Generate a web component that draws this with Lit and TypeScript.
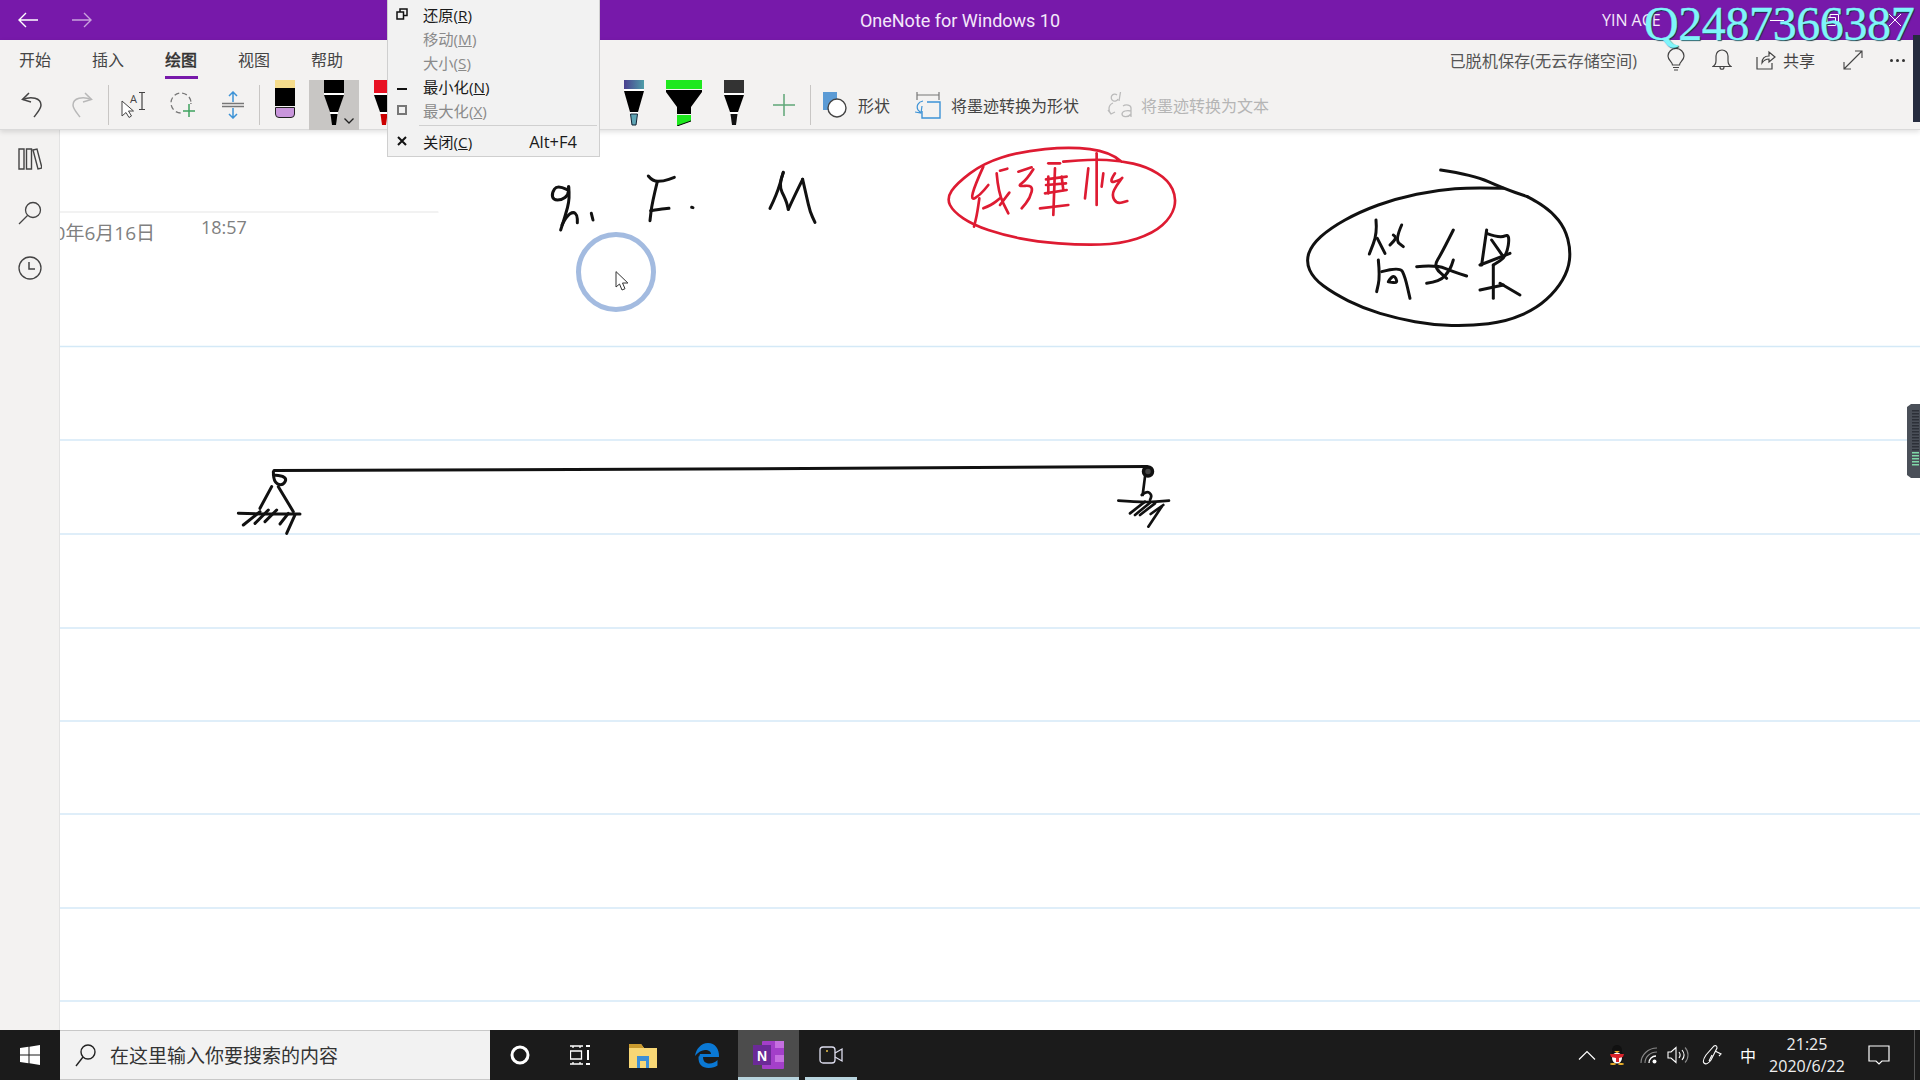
import {css, html, LitElement, svg} from "lit";
import {customElement} from "lit/decorators.js";

const smooth = (pts: string) => {
    const p = pts.trim().split(/\s+/).map(s => s.split(",").map(Number));
    if (p.length < 3) return `M${p[0]} L${p[p.length - 1]}`;
    let d = `M${p[0][0]} ${p[0][1]}`;
    for (let i = 1; i < p.length - 1; i++) {
        const mx = (p[i][0] + p[i + 1][0]) / 2;
        const my = (p[i][1] + p[i + 1][1]) / 2;
        d += ` Q${p[i][0]} ${p[i][1]} ${mx} ${my}`;
    }
    const l = p[p.length - 1];
    return d + ` L${l[0]} ${l[1]}`;
};

// ink strokes, written in the coordinates of a 3x crop at (x, y)
const INK = [
    {x: 520, y: 140, color: "#111", w: 9, strokes: [
        "140,148 112,134 95,160 100,180 125,180 145,165 146,140",
        "146,140 150,175 135,230 122,270",
        "126,255 140,228 160,215 172,226 172,248",
        "214,220 219,240",
        "385,108 398,124 430,124 463,112",
        "412,125 396,190 390,242",
        "392,212 420,208 447,205",
        "515,202 519,203",
        "750,205 770,165 790,97",
        "790,97 775,135 798,180 805,208",
        "805,208 825,165 848,118",
        "848,118 860,170 870,215 885,247",
    ]},
    {x: 920, y: 130, color: "#DE1B32", w: 8, strokes: [
        "605,95 570,65 450,50 300,65 190,100 110,160 80,205 100,245 160,285 250,315 350,335 480,345 600,342 700,310 755,260 770,205 745,150 680,110 600,92 520,88 430,95",
        "190,110 165,165 152,212 180,195 205,165",
        "178,205 172,250 162,290",
        "190,235 215,225 240,205",
        "230,130 235,190 265,250",
        "240,122 262,116",
        "268,188 240,225",
        "295,125 335,112",
        "340,118 320,150 290,170 340,165 330,205 305,235",
        "385,100 420,100",
        "378,148 440,140",
        "385,140 385,190",
        "378,165 438,160",
        "375,190 440,180",
        "425,140 430,180",
        "360,235 445,225",
        "405,115 400,255",
        "505,115 495,205",
        "530,70 530,225",
        "550,130 545,170",
        "585,130 565,160 600,150 610,140 590,165 575,195 590,222 622,213",
    ]},
    {x: 1290, y: 150, color: "#111", w: 9, strokes: [
        "452,60 550,75 640,115 712,140",
        "640,115 550,112 440,120 320,145 210,185 120,235 65,285 48,335 70,385 130,430 220,475 320,505 430,525 540,528 650,515 740,475 800,420 835,360 842,300 825,235 785,185 740,155 712,140",
        "258,210 262,250 238,312",
        "262,265 285,310",
        "310,255 322,262 300,285",
        "335,225 315,270 340,290",
        "265,330 270,380 260,425",
        "275,365 330,350 345,380 360,445",
        "295,395 310,370 325,400 295,395",
        "490,240 455,310 430,350 470,385",
        "380,350 440,345 490,365 530,378",
        "410,400 450,395 480,360 490,330",
        "590,240 575,345",
        "590,250 630,265 660,250 650,320 610,345",
        "605,270 640,320",
        "660,310 570,345",
        "570,420 640,405",
        "610,345 610,445",
        "630,400 690,435",
    ]},
    {x: 220, y: 450, color: "#111", w: 9, strokes: [
        "160,65 160,95 185,108 200,90 190,78 160,75",
        "155,110 120,175",
        "175,110 220,185",
        "55,190 150,192 240,192",
        "120,185 70,225",
        "145,180 105,220",
        "170,180 135,215",
        "205,190 180,222",
        "225,195 200,250",
    ]},
    {x: 1100, y: 450, color: "#111", w: 8, strokes: [
        "135,80 128,135",
        "125,135 140,122 156,135 150,150",
        "55,152 130,158 207,152",
        "135,155 90,190",
        "150,158 105,195",
        "165,160 120,195",
        "190,165 152,192",
        "185,170 145,230",
    ]},
];

const RULES = [346.5, 440, 534, 628, 721, 814, 908, 1001];

const pen = (top: string, tip: string) => html`
    <svg width="24" height="46" viewBox="0 0 24 46">
        <rect x="2" y="0" width="20" height="13" fill=${top}></rect>
        <rect x="2" y="13" width="20" height="2" fill="#fff"></rect>
        <polygon points="2,15 22,15 16,32 8,32" fill="#000"></polygon>
        <rect x="8" y="32" width="8" height="2" fill="#fff"></rect>
        <polygon points="8.5,34 15.5,34 14,45 10,45" fill=${tip}></polygon>
    </svg>`;

@customElement("app-root")
export class AppRoot extends LitElement {
    protected override render() {
        return html`
            <div class="titlebar">
                <div class="nav">
                    <svg width="22" height="16" viewBox="0 0 22 16" fill="none" stroke="#fff" stroke-width="1.4"><path d="M21 8H2M9 1L2 8l7 7"></path></svg>
                    <svg width="22" height="16" viewBox="0 0 22 16" fill="none" stroke="#C9A2DD" stroke-width="1.4"><path d="M1 8h19M13 1l7 7-7 7"></path></svg>
                </div>
                <div class="title">OneNote for Windows 10</div>
                <div class="account">
                    <span class="user">YIN ACE</span>
                    <span class="bar"></span>
                    <span class="min"></span>
                    <svg class="restore" width="12" height="12" viewBox="0 0 12 12" fill="none" stroke="#fff"><path d="M.5 3.5h8v8h-8zM3 3V.5h8.500v8H9"></path></svg>
                    <svg class="close" width="12" height="12" viewBox="0 0 12 12" fill="none" stroke="#fff"><path d="M0 0l12 12M12 0L0 12"></path></svg>
                </div>
            </div>

            <div class="ribbon">
                <div class="tabs">
                    <span class="tab">开始</span>
                    <span class="tab">插入</span>
                    <span class="tab active">绘图</span>
                    <span class="tab">视图</span>
                    <span class="tab">帮助</span>
                    <div class="status">
                        <span class="saved">已脱机保存(无云存储空间)</span>
                        <span class="top-btn">
                            <svg width="20" height="24" viewBox="0 0 20 24" fill="none" stroke="#444" stroke-width="1.2"><path d="M6.500 17c0-3-4.500-4.500-4.500-9a8 7.500 0 0 1 16 0c0 4.500-4.500 6-4.500 9zM7 19.500h6M8 22h4"></path></svg>
                        </span>
                        <span class="top-btn">
                            <svg width="20" height="22" viewBox="0 0 20 22" fill="none" stroke="#444" stroke-width="1.2"><path d="M1 17.500c2.500-1.500 3-3 3-6V7a6 6 0 0 1 12 0v4.500c0 3 .5 4.500 3 6zM8 18c0 3 4 3 4 0"></path></svg>
                        </span>
                        <span class="share">
                            <svg width="20" height="20" viewBox="0 0 20 20" fill="none" stroke="#444" stroke-width="1.200"><path d="M1 7v12h15v-6M6 13c0-5 3-7 7-7V2l6 5-6 5V9c-3 0-5 1-7 4z"></path></svg>
                            <span>共享</span>
                        </span>
                        <span class="top-btn">
                            <svg width="20" height="20" viewBox="0 0 20 20" fill="none" stroke="#444" stroke-width="1.100"><path d="M1 19L19 1M12 1h7v7M1 12v7h7"></path></svg>
                        </span>
                        <span class="top-btn dots"><i></i><i></i><i></i></span>
                    </div>
                </div>
                <div class="tools">
                    <span class="tool">
                        <svg width="24" height="28" viewBox="0 0 24 28" fill="none" stroke="#444" stroke-width="1.500"><path d="M9 2L2.500 8.500 11 11"></path><path d="M3 8.500C11 5 21 7 21 14c0 4-4 8-7 12"></path></svg>
                    </span>
                    <span class="tool">
                        <svg width="24" height="28" viewBox="0 0 24 28" fill="none" stroke="#B8B8B8" stroke-width="1.500"><path d="M15 2l6.500 6.500L13 11"></path><path d="M21 8.500C13 5 3 7 3 14c0 4 4 8 7 12"></path></svg>
                    </span>
                    <span class="sep"></span>
                    <span class="tool">
                        <svg width="26" height="28" viewBox="0 0 26 28" fill="none" stroke="#444"><path d="M2 10v15l4-3.500 3 5 2.500-1.500-3-5h5z" fill="#fff"></path><path d="M19 1.500h6M22 1.500v17M19 18.500h6" stroke-width="1.200"></path><text x="10" y="12" font-size="11" fill="#444" stroke="none" font-family="Open Sans">A</text></svg>
                    </span>
                    <span class="tool">
                        <svg width="26" height="28" viewBox="0 0 26 28" fill="none"><circle cx="11" cy="12" r="10" stroke="#777" stroke-width="1.300" stroke-dasharray="5 3"></circle><rect x="12" y="13" width="14" height="14" fill="#F3F2F1"></rect><path d="M19 13v13M13 20h12" stroke="#3FA35F" stroke-width="1.500"></path></svg>
                    </span>
                    <span class="tool">
                        <svg width="24" height="28" viewBox="0 0 24 28" fill="none"><path d="M12 1v10M8 5l4-4 4 4M12 27V17M8 23l4 4 4-4" stroke="#3D93D6" stroke-width="1.500"></path><path d="M1 12.500h22M1 15.500h22" stroke="#777" stroke-width="1.300"></path></svg>
                    </span>
                    <span class="sep"></span>
                    <span class="tool tall">
                        <svg class="eraser" width="22" height="38" viewBox="0 0 22 38"><rect x="1" y="0" width="20" height="8" fill="#F5DC8C"></rect><rect x="1" y="8" width="20" height="18" fill="#000"></rect><path d="M1.500 27.500h19V34a3.500 3.500 0 0 1-3.500 3.500H5A3.500 3.500 0 0 1 1.500 34z" fill="#C996DC" stroke="#222"></path></svg>
                    </span>
                    <span class="tool selected tall">
                        ${pen("#000", "#000")}
                        <svg class="caret" width="10" height="6" viewBox="0 0 10 6" fill="none" stroke="#222" stroke-width="1.300"><path d="M.5.500L5 5 9.500.500"></path></svg>
                    </span>
                    <span class="tool tall">${pen("#E81123", "#C00")}</span>
                    <span class="hidden-pens"></span>
                    <span class="tool tall">
                        <svg width="24" height="46" viewBox="0 0 24 46"><defs><linearGradient id="ink" x1="0" x2="1"><stop offset="0" stop-color="#4A3F8F"></stop><stop offset="1" stop-color="#4E9DA8"></stop></linearGradient></defs><rect x="2" y="0" width="20" height="9" fill="url(#ink)"></rect><rect x="2" y="9" width="20" height="2" fill="#fff"></rect><polygon points="2,11 22,11 16,32 8,32" fill="#000"></polygon><rect x="8" y="32" width="8" height="2" fill="#fff"></rect><polygon points="8.500,34 15.500,34 14,45 10,45" fill="#5FA5B5" stroke="#123"></polygon></svg>
                    </span>
                    <span class="tool tall">
                        <svg width="38" height="46" viewBox="0 0 38 46"><rect x="1" y="0" width="36" height="9" fill="#1EE81E"></rect><polygon points="1,10 37,10 37,12 26,27 26,34 12,34 12,27 1,12" fill="#000"></polygon><polygon points="12,35 26,35 26,41 12,46" fill="#1EE81E"></polygon><path d="M12 46l14-5" stroke="#000" fill="none"></path></svg>
                    </span>
                    <span class="tool tall">${pen("#333", "#111")}</span>
                    <span class="tool">
                        <svg width="22" height="30" viewBox="0 0 22 30" fill="none" stroke="#5FA777" stroke-width="1.500"><path d="M11 4v22M0 15h22"></path></svg>
                    </span>
                    <span class="sep"></span>
                    <span class="action first">
                        <svg width="26" height="28" viewBox="0 0 26 28"><rect x="1" y="1" width="14" height="18" fill="#5B9BD5"></rect><circle cx="15" cy="17" r="9" fill="#fff" stroke="#444" stroke-width="1.400"></circle></svg>
                        <span>形状</span>
                    </span>
                    <span class="action second">
                        <svg width="26" height="28" viewBox="0 0 26 28" fill="none"><path d="M2 1v8M24 1v8M2 4h22" stroke="#777" stroke-width="1.200"></path><path d="M12 11h13v16H7v-7" stroke="#3D93D6" stroke-width="1.400"></path><path d="M8 10C3 11 1 15 3 19l3 3M7 15l-1 7-6-1" stroke="#3D93D6" stroke-width="1.200"></path></svg>
                        <span>将墨迹转换为形状</span>
                    </span>
                    <span class="action disabled">
                        <svg width="26" height="30" viewBox="0 0 26 30" fill="none" stroke="#BBB" stroke-width="1.300"><path d="M6 13c-5 2-5 8-2 11M1 20l3 4 4-2"></path><path d="M10 5a3.500 3.500 0 1 0 1 4M13.500 2l-1.500 9"></path><path d="M16 16c3-2 8-1 8 2v9M24 21c-4-1-9 0-9 3s6 4 9 0"></path></svg>
                        <span>将墨迹转换为文本</span>
                    </span>
                </div>
            </div>

            <div class="main">
                <nav class="side">
                    <svg width="24" height="22" viewBox="0 0 24 22" fill="none" stroke="#444" stroke-width="1.400"><path d="M1 1h5v20H1zM8.500 1h5v20h-5zM15 2l4-1 5 19-4 1z"></path></svg>
                    <svg width="24" height="24" viewBox="0 0 24 24" fill="none" stroke="#444" stroke-width="1.300"><circle cx="15" cy="9" r="7.500"></circle><path d="M9.500 14.500L1 23"></path></svg>
                    <svg width="24" height="24" viewBox="0 0 24 24" fill="none" stroke="#444" stroke-width="1.300"><circle cx="12" cy="12" r="11"></circle><path d="M11 6v7h6" stroke-width="1.500"></path></svg>
                </nav>
                <div class="page">
                    <svg class="ink" width="1860" height="900" viewBox="60 130 1860 900" fill="none" stroke-linecap="round" stroke-linejoin="round">
                        ${RULES.map(y => svg`<line x1="60" x2="1920" y1=${y} y2=${y} stroke="#D4E9F7" stroke-width="1.500"></line>`)}
                        <line x1="60" x2="438" y1="212" y2="212" stroke="#E6E6E6" stroke-width="1.200"></line>
                        <path d="M274 470.500L700 469 1147 466.500" stroke="#111" stroke-width="3"></path>
                        <circle cx="1148" cy="471.500" r="4.500" stroke="#111" stroke-width="3.500" fill="#444"></circle>
                        <circle cx="616" cy="272" r="37.500" stroke="#A3BBE0" stroke-width="5"></circle>
                        ${INK.map(g => svg`
                            <g transform="translate(${g.x} ${g.y}) scale(.3333)" stroke=${g.color} stroke-width=${g.w}>
                                ${g.strokes.map(s => svg`<path d=${smooth(s)}></path>`)}
                            </g>`)}
                        <path d="M616 272v15l3.500-3 2.500 6 3-1.300-2.500-5.700h5z" fill="#fff" stroke="#333" stroke-width="1"></path>
                    </svg>
                    <div class="date">2020年6月16日</div>
                    <div class="time">18:57</div>
                </div>
            </div>

            <div class="taskbar">
                <span class="start">
                    <svg width="20" height="20" viewBox="0 0 20 20" fill="#fff"><path d="M0 3l8.500-1.200v7.700H0zM9.500 1.700L20 0v9.500H9.500zM0 10.500h8.500v7.700L0 17zM9.500 10.500H20V20L9.500 18.300z"></path></svg>
                </span>
                <div class="search">
                    <svg width="22" height="24" viewBox="0 0 22 24" fill="none" stroke="#222" stroke-width="1.400"><circle cx="13" cy="9" r="7"></circle><path d="M8 14L1 23"></path></svg>
                    <span>在这里输入你要搜索的内容</span>
                </div>
                <span class="task w60">
                    <svg width="20" height="20" viewBox="0 0 20 20" fill="none" stroke="#fff" stroke-width="3"><circle cx="10" cy="10" r="8"></circle></svg>
                </span>
                <span class="task w60">
                    <svg width="20" height="20" viewBox="0 0 20 20" fill="none" stroke="#fff" stroke-width="1.300"><path d="M0 1h13M0 19h13M.5 6h11v8H.5zM3 1v2M10 1v2M3 17v2M10 17v2"></path><path d="M16 1h4M16 19h4M18 5v10" stroke-width="2"></path></svg>
                </span>
                <span class="task explorer">
                    <svg width="28" height="26" viewBox="0 0 28 26"><path d="M0 2h12l3 4h13v20H0z" fill="#F8D775"></path><path d="M0 2h12l3 4H0z" fill="#C99A2E"></path><path d="M8 14h12v12h-3v-7h-6v7H8z" fill="#3D8FD6"></path></svg>
                </span>
                <span class="task edge">
                    <svg width="26" height="28" viewBox="0 0 26 28" fill="none"><path d="M5 16h20c.500-8-4-14-11-14C7 2 2 8 1 15c3-4 7-6 10-6 4 0 6 2 6 4H6" fill="#0A78D4"></path><path d="M4.500 15.500c-.500 8 4 11.500 10 11.500 4 0 7-1 9-2.500v-5.500c-2 2-5 3.500-8 3.500-4 0-6.500-2-6.500-7z" fill="#0A78D4"></path></svg>
                </span>
                <span class="task onenote">
                    <svg width="32" height="30" viewBox="0 0 32 30"><rect x="9" y="1" width="22" height="28" rx="1" fill="#A33FC9"></rect><path d="M22 1h9v7h-9zM22 15h9v7h-9z" fill="#C56FE0"></path><rect x="0" y="5" width="18" height="20" fill="#6B2A97"></rect><text x="4" y="20.500" font-size="14" font-weight="700" fill="#fff" font-family="Liberation Sans">N</text></svg>
                </span>
                <span class="task camera">
                    <svg width="24" height="22" viewBox="0 0 24 22" fill="none" stroke="#DDE" stroke-width="1.300"><rect x="1" y="3" width="15" height="16" rx="3"></rect><path d="M16 9l7-4v12l-7-4"></path><circle cx="8" cy="7" r="1" fill="#E8C04A" stroke="none"></circle></svg>
                </span>
                <div class="tray">
                    <span class="t chev">
                        <svg width="18" height="10" viewBox="0 0 18 10" fill="none" stroke="#fff" stroke-width="1.200"><path d="M1 9.500l8-8 8 8"></path></svg>
                    </span>
                    <span class="t qq">
                        <svg width="16" height="20" viewBox="0 0 16 20"><ellipse cx="8" cy="12" rx="6.500" ry="7.500" fill="#111"></ellipse><ellipse cx="8" cy="5" rx="5" ry="5" fill="#111"></ellipse><ellipse cx="8" cy="13" rx="5" ry="5.500" fill="#fff"></ellipse><path d="M1 9h14l-1 3-4 1v4H7v-4l-5-1z" fill="#D8232A"></path><path d="M5 6h6L8 8z" fill="#F5B62A"></path><ellipse cx="4" cy="19" rx="3" ry="1" fill="#F5B62A"></ellipse><ellipse cx="12" cy="19" rx="3" ry="1" fill="#F5B62A"></ellipse></svg>
                    </span>
                    <span class="t wifi">
                        <svg width="18" height="18" viewBox="0 0 18 18" fill="none" stroke="#8A8A8A" stroke-width="1.100"><path d="M1 17C1 9 8 2 17 2M5 17c0-6 5-11 12-11"></path><path d="M9 17c0-4 3-7 7-7" stroke="#fff" stroke-width="1.300"></path><circle cx="14.500" cy="15.500" r="2" fill="#fff" stroke="none"></circle></svg>
                    </span>
                    <span class="t vol">
                        <svg width="22" height="18" viewBox="0 0 22 18" fill="none" stroke="#fff" stroke-width="1.100"><path d="M1 6h3l5-4.500v15L4 12H1z"></path><path d="M12 6c1.500 2 1.500 4 0 6"></path><path d="M15 4c2.500 3 2.500 7 0 10"></path><path d="M18 1.500c4 4 4 11 0 15" stroke="#888"></path></svg>
                    </span>
                    <span class="t penicon">
                        <svg width="22" height="22" viewBox="0 0 22 22" fill="none" stroke="#fff" stroke-width="1.100"><path d="M2 19c-2-2 0-5 2-8L12 2c2-1 3 0 3 2l-6 12c-2 3-5 5-7 3zM13 7l6 3-2 2M10 11l-3 6"></path></svg>
                    </span>
                    <span class="t ime">中</span>
                    <span class="t clock"><span>21:25</span><span>2020/6/22</span></span>
                    <span class="t note">
                        <svg width="22" height="20" viewBox="0 0 22 20" fill="none" stroke="#fff" stroke-width="1.200"><path d="M1 1h20v15h-7l-3 3-3-3H1z"></path></svg>
                    </span>
                    <span class="t end"></span>
                </div>
            </div>

            <div class="menu">
                <div class="item">
                    <svg width="12" height="12" viewBox="0 0 12 12" fill="none" stroke="#111" stroke-width="1.500"><path d="M1 4h6.500v7H1zM4 3.500V1h7v6.500H8"></path></svg>
                    <span>还原(<u>R</u>)</span>
                </div>
                <div class="item off"><span class="icon-gap"></span><span>移动(<u>M</u>)</span></div>
                <div class="item off"><span class="icon-gap"></span><span>大小(<u>S</u>)</span></div>
                <div class="item">
                    <svg width="12" height="12" viewBox="0 0 12 12"><rect x="1" y="8" width="10" height="2" fill="#111"></rect></svg>
                    <span>最小化(<u>N</u>)</span>
                </div>
                <div class="item off">
                    <svg width="12" height="12" viewBox="0 0 12 12" fill="none" stroke="#777" stroke-width="2"><path d="M2 2h8v8H2z"></path></svg>
                    <span>最大化(<u>X</u>)</span>
                </div>
                <div class="divider"></div>
                <div class="item">
                    <svg width="12" height="12" viewBox="0 0 12 12" fill="none" stroke="#111" stroke-width="2"><path d="M2 2l8 8M10 2l-8 8"></path></svg>
                    <span>关闭(<u>C</u>)</span>
                    <span class="shortcut">Alt+F4</span>
                </div>
            </div>

            <div class="watermark">Q2487366387</div>
            <div class="edge-bar"></div>
            <div class="handle">
                <svg width="13" height="74" viewBox="0 0 13 74">
                    <path d="M13 0H4L0 3v68l4 3h9z" fill="#4A4F58"></path>
                    ${Array.from({length: 19}, (_, i) => svg`<rect x="5" y=${6 + i * 3} width="7" height="1.500" fill=${i > 13 ? "#7FD8A8" : "#2C3038"}></rect>`)}
                </svg>
            </div>
        `;
    }

    static override styles = css`
        :host {
            display: flex;
            flex-direction: column;
            position: relative;
            width: 1920px;
            height: 1080px;
            overflow: hidden;
            background: #fff;
            color: #333;
            font-family: "Open Sans", "Noto Sans CJK SC", sans-serif;
        }
        svg {
            display: block;
            flex: none;
        }

        .titlebar {
            display: grid;
            grid-template-columns: 1fr auto 1fr;
            align-items: center;
            height: 40px;
            background: #7719AA;
            color: #fff;
        }
        .nav {
            display: flex;
            align-items: center;
            gap: 32px;
            padding-left: 17px;
            margin-top: -1px;
        }
        .title {
            font-family: Roboto, sans-serif;
            font-size: 18px;
            color: #F4E8FA;
        }
        .account {
            display: flex;
            align-items: center;
            justify-content: flex-end;
            font-size: 16px;
        }
        .user {
            width: 115px;
            color: #F4E8FA;
        }
        .bar {
            width: 1px;
            height: 20px;
            background: #fff;
        }
        .min {
            width: 14px;
            height: 1px;
            margin-left: 52px;
            background: #fff;
        }
        .restore {
            margin-left: 43px;
        }
        .close {
            margin: 0 19px 0 50px;
        }

        .ribbon {
            position: relative;
            z-index: 1;
            height: 90px;
            background: #F3F2F1;
            border-bottom: 1px solid #DADADA;
            box-shadow: 0 2px 5px rgba(0, 0, 0, 0.12);
            box-sizing: border-box;
        }
        .tabs {
            display: flex;
            align-items: center;
            gap: 40px;
            height: 40px;
            padding-left: 19px;
        }
        .tab {
            position: relative;
            width: 33px;
            font-size: 16px;
            line-height: 40px;
            color: #444;
            white-space: nowrap;
        }
        .tab.active {
            color: #333;
            font-weight: 500;
            -webkit-text-stroke: 0.3px #333;
        }
        .tab.active::after {
            content: "";
            position: absolute;
            left: 0;
            right: 0;
            bottom: 1px;
            height: 3px;
            background: #7719AA;
        }
        .status {
            display: flex;
            align-items: center;
            height: 40px;
            margin-left: auto;
            padding-right: 2px;
        }
        .saved {
            margin-right: 16px;
            font-size: 16.2px;
            color: #555;
        }
        .top-btn {
            display: flex;
            align-items: center;
            justify-content: center;
            width: 46px;
        }
        .share {
            display: flex;
            align-items: center;
            gap: 7px;
            width: 85px;
            padding-left: 11px;
            box-sizing: border-box;
            font-size: 16px;
            color: #444;
        }
        .dots {
            gap: 3px;
            width: 42px;
        }
        .dots i {
            width: 3px;
            height: 3px;
            border-radius: 50%;
            background: #333;
        }

        .tools {
            display: flex;
            align-items: center;
            height: 50px;
            padding-left: 7px;
        }
        .tool {
            position: relative;
            display: flex;
            align-items: center;
            justify-content: center;
            flex: none;
            width: 50px;
            height: 50px;
        }
        .tool.tall {
            align-items: flex-start;
        }
        .tool.selected {
            background: #C8C6C4;
        }
        .eraser {
            margin-left: 2px;
        }
        .caret {
            position: absolute;
            right: 5px;
            bottom: 6px;
        }
        .sep {
            flex: none;
            width: 1px;
            height: 40px;
            margin-left: 1px;
            background: #C8C6C4;
        }
        .sep + .tool {
            margin-left: -1px;
        }
        .hidden-pens {
            flex: none;
            width: 200px;
        }
        .action {
            display: flex;
            align-items: center;
            flex: none;
            gap: 10px;
            font-size: 16px;
            color: #444;
        }
        .action.first {
            margin-left: 11px;
        }
        .action.second {
            margin-left: 25px;
        }
        .action.disabled {
            gap: 8px;
            margin-left: 28px;
            color: #B5B5B5;
        }

        .main {
            display: flex;
            flex: 1;
            min-height: 0;
        }
        .side {
            display: flex;
            flex-direction: column;
            align-items: center;
            gap: 31px;
            flex: none;
            width: 60px;
            padding-top: 18px;
            box-sizing: border-box;
            background: #F3F2F1;
            border-right: 1px solid #E3E3E3;
        }
        .page {
            position: relative;
            flex: 1;
            overflow: hidden;
            background: #fff;
        }
        .ink {
            position: absolute;
            left: 0;
            top: 0;
        }
        .date {
            position: absolute;
            right: calc(100% - 95px);
            top: 89px;
            font-size: 19px;
            line-height: 28px;
            color: #808080;
            white-space: nowrap;
        }
        .time {
            position: absolute;
            left: 141px;
            top: 85px;
            font-size: 18px;
            line-height: 24px;
            color: #808080;
        }

        .taskbar {
            display: flex;
            align-items: center;
            height: 50px;
            background: #1B1B1B;
        }
        .start {
            display: flex;
            align-items: center;
            justify-content: center;
            flex: none;
            width: 60px;
        }
        .search {
            display: flex;
            align-items: center;
            gap: 13px;
            flex: none;
            width: 430px;
            height: 50px;
            padding-left: 15px;
            box-sizing: border-box;
            background: #F2F2F2;
            border-top: 1px solid #C8C8C8;
            border-bottom: 1px solid #C8C8C8;
            font-size: 19px;
            color: #333;
        }
        .task {
            position: relative;
            display: flex;
            align-items: center;
            justify-content: center;
            flex: none;
            height: 50px;
        }
        .task.w60 { width: 60px; }
        .task.explorer { width: 66px; }
        .task.edge { width: 62px; }
        .task.onenote {
            width: 61px;
            background: #4C4C4C;
        }
        .task.camera { width: 63px; }
        .task.onenote::after,
        .task.camera::after {
            content: "";
            position: absolute;
            left: 0;
            right: 0;
            bottom: 0;
            height: 3px;
            background: #B8D4DE;
        }
        .task.camera::after {
            left: 6px;
            right: 5px;
        }
        .tray {
            display: flex;
            align-items: center;
            height: 50px;
            margin-left: auto;
        }
        .t {
            display: flex;
            align-items: center;
            justify-content: center;
            flex: none;
        }
        .chev { width: 30px; }
        .qq { width: 30px; }
        .wifi { width: 34px; }
        .vol { width: 24px; }
        .penicon { width: 46px; }
        .ime {
            width: 24px;
            font-size: 16px;
            color: #fff;
        }
        .clock {
            flex-direction: column;
            gap: 1px;
            width: 94px;
            font-size: 16px;
            line-height: 21px;
            color: #EEE;
        }
        .note { width: 50px; }
        .end {
            width: 16px;
            height: 50px;
            box-sizing: border-box;
            border-right: 5px solid #1B1B1B;
            background: linear-gradient(90deg, #1B1B1B 10px, #555 10px, #555 11px, #1B1B1B 11px);
        }

        .menu {
            position: absolute;
            z-index: 3;
            left: 387px;
            top: 0;
            width: 213px;
            height: 157px;
            padding-top: 2px;
            box-sizing: border-box;
            background: #F2F2F2;
            border: 1px solid #CFCFCF;
            border-top: none;
            font-size: 15.3px;
            color: #1A1A1A;
        }
        .item {
            display: flex;
            align-items: center;
            gap: 15px;
            height: 24px;
            padding-left: 8px;
        }
        .item.off {
            color: #8A8A8A;
        }
        .icon-gap {
            width: 12px;
        }
        .shortcut {
            margin-left: auto;
            margin-right: 22px;
            font-size: 16.5px;
        }
        .divider {
            height: 1px;
            margin: 3px 2px 3px 31px;
            background: #D0D0D0;
        }
        .watermark {
            position: absolute;
            z-index: 4;
            left: 1644px;
            top: -4px;
            font-family: "Liberation Serif", serif;
            font-size: 48px;
            line-height: 56px;
            letter-spacing: -0.4px;
            color: #7FF5FA;
            -webkit-text-stroke: 0.4px #7FF5FA;
            text-shadow: 1px 1px 1px #10303A;
            white-space: nowrap;
        }
        .edge-bar {
            position: absolute;
            z-index: 2;
            right: 0;
            top: 35px;
            width: 7px;
            height: 87px;
            background: #252B3E;
        }
        .handle {
            position: absolute;
            z-index: 2;
            right: 0;
            top: 404px;
        }
    `;
}

declare global {
    interface HTMLElementTagNameMap {
        "app-root": AppRoot;
    }
}
